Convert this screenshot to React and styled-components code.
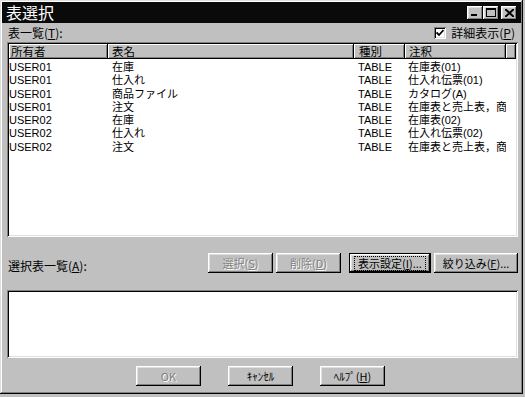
import React from 'react'
import styled, { createGlobalStyle, css } from 'styled-components'

const Global = createGlobalStyle`
    html, body {
        margin: 0;
        padding: 0;
        background: #c0c0c0;
    }
    body {
        font-family: "Noto Sans CJK JP", "Liberation Sans", sans-serif;
        font-size: 12px;
        color: #000;
    }
`

const raised = css`
    box-shadow: inset -1px -1px #000, inset 1px 1px #fff, inset -2px -2px #808080, inset 2px 2px #dfdfdf;
`

const sunken = css`
    box-shadow: inset 1px 1px #808080, inset -1px -1px #fff, inset 2px 2px #000, inset -2px -2px #dfdfdf;
`

const Window = styled.div`
    width: 523px;
    height: 394px;
    box-sizing: border-box;
    padding: 2px;
    background: #c0c0c0;
    box-shadow: inset -1px -1px #000, inset 1px 1px #dfdfdf, inset -2px -2px #808080, inset 2px 2px #fff;
    display: flex;
    flex-direction: column;
`

const TitleBar = styled.div`
    height: 21px;
    background: #0a0a0a;
    display: flex;
    align-items: center;
    padding: 0 4px 0 4px;
`

const Title = styled.div`
    flex: 1;
    color: #fff;
    font-size: 16px;
    line-height: 21px;
`

const TitleButton = styled.div`
    width: 16px;
    height: 14px;
    background: #c0c0c0;
    ${raised};
    display: flex;
    align-items: center;
    justify-content: center;
    margin-left: ${p => p.$gap || 0}px;
`

const Content = styled.div`
    flex: 1;
    display: flex;
    flex-direction: column;
    padding: 0 3px 0 5px;
`

const TopRow = styled.div`
    height: 19px;
    display: flex;
    align-items: center;
    justify-content: space-between;
    padding: 0 0 0 1px;
`

const Check = styled.label`
    display: flex;
    align-items: center;
    gap: 5px;
    margin-right: 3px;
`

const CheckBox = styled.span`
    width: 12px;
    height: 12px;
    background: #fff;
    ${sunken};
    display: flex;
    align-items: center;
    justify-content: center;
`

const ListView = styled.div`
    height: 195px;
    box-sizing: border-box;
    padding: 2px;
    background: #fff;
    ${sunken};
    overflow: hidden;
`

const columns = '99px 246px 51px 101px 1fr'

const Header = styled.div`
    display: grid;
    grid-template-columns: ${columns};
    height: 15px;
`

const HeadCell = styled.div`
    background: #c0c0c0;
    box-shadow: inset -1px -1px #000, inset 1px 1px #fff, inset -2px -2px #808080;
    padding-left: ${p => p.$pad ?? 4}px;
    line-height: 15px;
    font-size: 11.5px;
    white-space: nowrap;
`

const Rows = styled.div`
    padding-top: 2px;
`

const Row = styled.div`
    display: grid;
    grid-template-columns: ${columns};
    height: 13.3px;
    line-height: 13.3px;
`

const Cell = styled.div`
    padding-left: ${p => p.$pad ?? 4}px;
    white-space: nowrap;
    overflow: ${p => (p.$clip ? 'hidden' : 'visible')};
    font-family: "Liberation Sans", "Noto Sans CJK JP", sans-serif;
    font-size: 11px;
`

const MidRow = styled.div`
    display: flex;
    align-items: center;
    margin-top: 16px;
    height: 20px;
    padding-left: 1px;
`

const MidLabel = styled.div`
    flex: 1;
    padding-top: 4px;
`

const Button = styled.div`
    width: ${p => p.$w || 65}px;
    height: 20px;
    box-sizing: border-box;
    background: #c0c0c0;
    ${raised};
    display: flex;
    align-items: center;
    justify-content: center;
    margin-left: ${p => p.$ml || 0}px;
    font-size: 11px;
    white-space: nowrap;
    color: ${p => (p.$disabled ? '#808080' : '#000')};
    text-shadow: ${p => (p.$disabled ? '1px 1px #fff' : 'none')};
    ${p =>
        p.$default &&
        css`
            box-shadow: inset 0 0 0 1px #000, inset -2px -2px #000, inset 2px 2px #fff, inset -3px -3px #808080,
                inset 3px 3px #dfdfdf;
        `}
`

const Focus = styled.span`
    border: 1px dotted #000;
    padding: 0 3px;
    line-height: 13px;
`

const LowerList = styled.div`
    height: 68px;
    margin-top: 17px;
    background: #fff;
    ${sunken};
`

const BottomRow = styled.div`
    display: flex;
    justify-content: center;
    margin-top: 8px;
    padding-right: 4px;
`

const rows = [
    ['USER01', '在庫', 'TABLE', '在庫表(01)'],
    ['USER01', '仕入れ', 'TABLE', '仕入れ伝票(01)'],
    ['USER01', '商品ファイル', 'TABLE', 'カタログ(A)'],
    ['USER01', '注文', 'TABLE', '在庫表と売上表，商品ファイル'],
    ['USER02', '在庫', 'TABLE', '在庫表(02)'],
    ['USER02', '仕入れ', 'TABLE', '仕入れ伝票(02)'],
    ['USER02', '注文', 'TABLE', '在庫表と売上表，商品ファイル'],
]

const App = () => {
    return (
        <Window>
            <Global />
            <TitleBar>
                <Title>表選択</Title>
                <TitleButton>
                    <svg width="8" height="8" viewBox="0 0 8 8">
                        <rect x="0" y="5" width="6" height="2" fill="#000" />
                    </svg>
                </TitleButton>
                <TitleButton>
                    <svg width="10" height="9" viewBox="0 0 10 9">
                        <rect x="0.5" y="0.5" width="9" height="8" fill="none" stroke="#000" />
                        <rect x="0" y="0" width="10" height="2" fill="#000" />
                    </svg>
                </TitleButton>
                <TitleButton $gap={2}>
                    <svg width="9" height="8" viewBox="0 0 9 8">
                        <path d="M0 0 L9 8 M9 0 L0 8" stroke="#000" strokeWidth="2" />
                    </svg>
                </TitleButton>
            </TitleBar>
            <Content>
                <TopRow>
                    <span>表一覧(<u>T</u>):</span>
                    <Check>
                        <CheckBox>
                            <svg width="8" height="8" viewBox="0 0 8 8">
                                <path d="M0.5 3.5 L3 6 L7.5 1" stroke="#000" strokeWidth="1.8" fill="none" />
                            </svg>
                        </CheckBox>
                        <span>詳細表示(<u>P</u>)</span>
                    </Check>
                </TopRow>
                <ListView>
                    <Header>
                        <HeadCell $pad={2}>所有者</HeadCell>
                        <HeadCell>表名</HeadCell>
                        <HeadCell $pad={5}>種別</HeadCell>
                        <HeadCell>注釈</HeadCell>
                        <HeadCell />
                    </Header>
                    <Rows>
                        {rows.map((r, i) => (
                            <Row key={i}>
                                <Cell $pad={0}>{r[0]}</Cell>
                                <Cell>{r[1]}</Cell>
                                <Cell>{r[2]}</Cell>
                                <Cell $pad={3} $clip>{r[3]}</Cell>
                                <Cell />
                            </Row>
                        ))}
                    </Rows>
                </ListView>
                <MidRow>
                    <MidLabel>選択表一覧(<u>A</u>):</MidLabel>
                    <Button $disabled>選択(<u>S</u>)</Button>
                    <Button $disabled $ml={3}>削除(<u>D</u>)</Button>
                    <Button $default $w={82} $ml={8}>
                        <Focus>表示設定(<u>I</u>)...</Focus>
                    </Button>
                    <Button $w={84} $ml={3}>絞り込み(<u>F</u>)...</Button>
                </MidRow>
                <LowerList />
                <BottomRow>
                    <Button $disabled>OK</Button>
                    <Button $ml={27}>ｷｬﾝｾﾙ</Button>
                    <Button $ml={27}>ﾍﾙﾌﾟ(<u>H</u>)</Button>
                </BottomRow>
            </Content>
        </Window>
    )
}

export default App
